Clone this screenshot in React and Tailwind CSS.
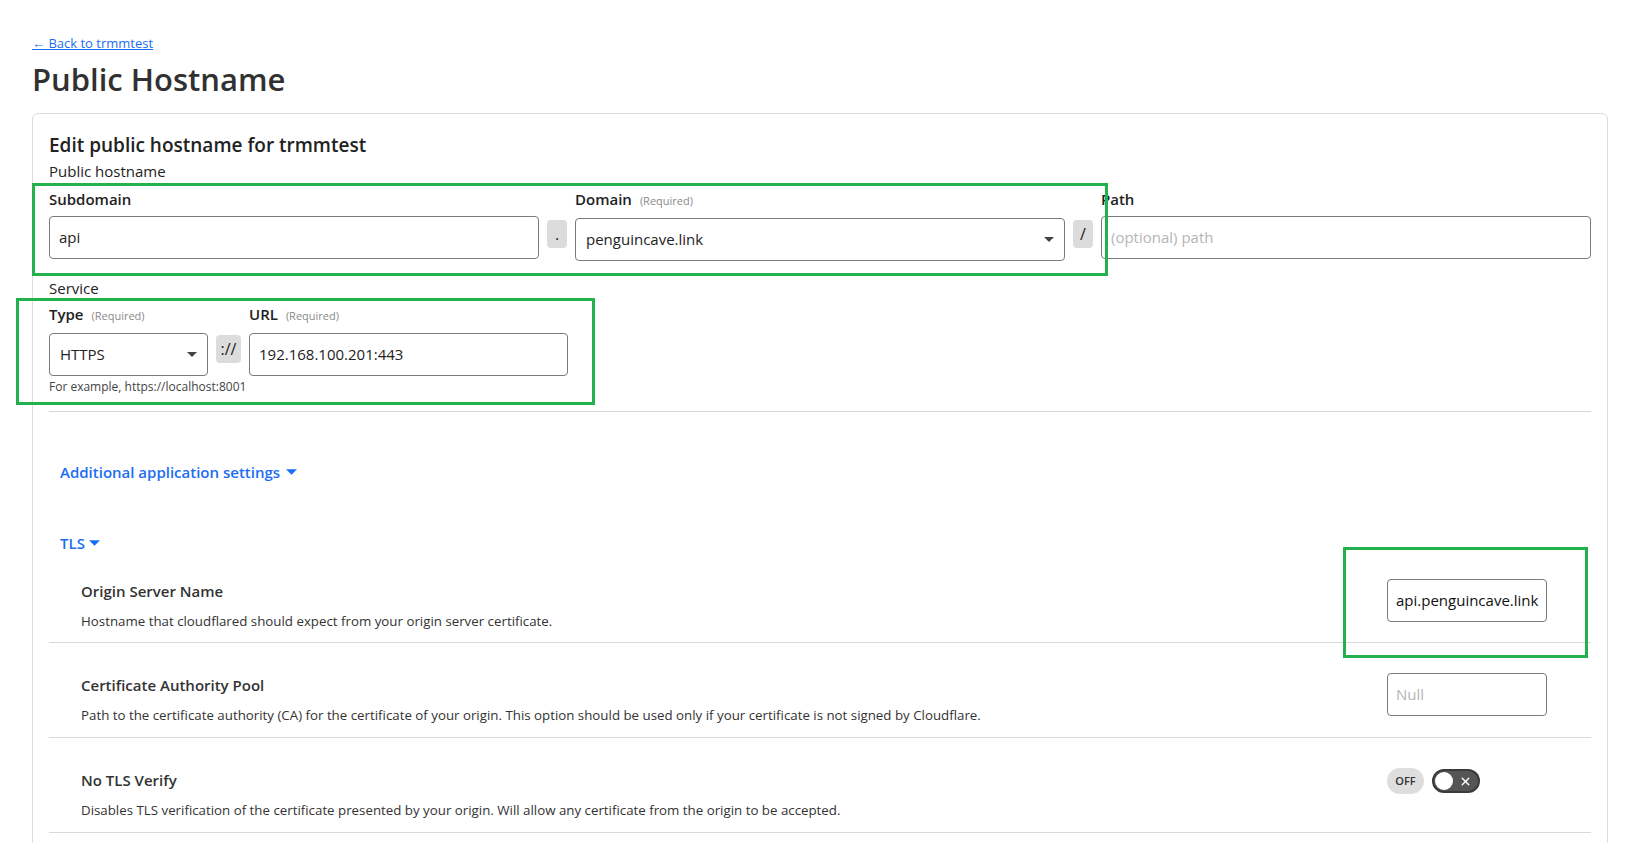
import { X } from 'lucide-react';

function Caret({ className = '' }) {
  return (
    <svg viewBox="0 0 10 5" className={`w-[10px] h-[5px] ${className}`} fill="currentColor">
      <path d="M0 0h10L5 5z" />
    </svg>
  );
}

function Sep({ children, w = 'w-5' }) {
  return (
    <div className="pt-[32px] shrink-0">
      <div className={`h-7 ${w} rounded bg-[#dcdcdc] flex items-center justify-center text-[16px] text-[#222]`}>
        {children}
      </div>
    </div>
  );
}

function Label({ children, required }) {
  return (
    <div className="mb-[6px] flex items-baseline gap-2 text-[15px] leading-[22px] font-semibold text-[#222]">
      {children}
      {required && <span className="text-[11px] font-normal text-[#8a8a8a]">(Required)</span>}
    </div>
  );
}

function SettingRow({ title, desc, children, first }) {
  return (
    <div className={`flex items-start justify-between border-b border-[#d9d9d9] pl-8 pr-11 ${first ? 'pt-6 pb-[11px]' : 'pt-[30px] pb-[12px]'}`}>
      <div>
        <div className="text-[15px] leading-6 font-semibold text-[#333]">{title}</div>
        <div className="mt-2 text-[13.3px] leading-5 text-[#333]">{desc}</div>
      </div>
      {children}
    </div>
  );
}

export default function App() {
  return (
    <div className="relative min-h-screen bg-white px-8 pt-[30px] font-['Open_Sans',sans-serif] text-[#333]">
      <a href="#" className="text-[13px] leading-5 text-[#1b6ef3] underline">← Back to trmmtest</a>
      <h1 className="mt-[5px] text-[31px] leading-10 font-semibold text-[#313131]">Public Hostname</h1>

      <div className="mt-[14px] rounded-md border border-[#dcdcdc] px-4 pt-[17px]">
        <h2 className="text-[19px] leading-7 font-semibold text-[#222]">Edit public hostname for trmmtest</h2>
        <div className="mt-[1px] text-[15px] leading-[22px] text-[#222]">Public hostname</div>

        <div className="mt-[6px] flex gap-2">
          <div className="flex-1">
            <Label>Subdomain</Label>
            <div className="h-[43px] rounded border border-[#7a7a7a] px-[9px] flex items-center text-[15px] text-[#222]">api</div>
          </div>
          <Sep>.</Sep>
          <div className="flex-1">
            <Label required>Domain</Label>
            <div className="h-[43px] rounded border border-[#7a7a7a] pl-[10px] pr-[10px] flex items-center justify-between text-[15px] text-[#222]">
              penguincave.link
              <Caret className="text-[#444]" />
            </div>
          </div>
          <Sep>/</Sep>
          <div className="flex-1">
            <Label>Path</Label>
            <div className="h-[43px] rounded border border-[#7a7a7a] px-[9px] flex items-center text-[15px] text-[#b5b5b5]">(optional) path</div>
          </div>
        </div>

        <div className="mt-[16px] text-[15px] leading-[22px] text-[#222]">Service</div>
        <div className="mt-[4px] flex gap-2">
          <div className="w-[159px]">
            <Label required>Type</Label>
            <div className="h-[43px] rounded border border-[#7a7a7a] pl-[10px] pr-[10px] flex items-center justify-between text-[15px] text-[#222]">
              HTTPS
              <Caret className="text-[#444]" />
            </div>
          </div>
          <Sep w="w-[25px]">://</Sep>
          <div className="w-[319px]">
            <Label required>URL</Label>
            <div className="h-[43px] rounded border border-[#7a7a7a] px-[9px] flex items-center text-[15px] text-[#222]">192.168.100.201:443</div>
          </div>
        </div>
        <div className="mt-[3px] text-[12px] leading-4 text-[#444]">For example, https://localhost:8001</div>

        <div className="mt-[16px] border-t border-[#d6d6d6]" />

        <div className="mt-[48px] pl-[11px] flex items-center gap-[6px] text-[15px] leading-6 font-semibold text-[#1b6ef3]">
          Additional application settings
          <Caret className="w-[11px] h-[6px]" />
        </div>

        <div className="mt-[47px] pl-[11px] flex items-center gap-[4px] text-[15px] leading-6 font-semibold text-[#1b6ef3]">
          TLS
          <Caret className="w-[11px] h-[6px]" />
        </div>

        <SettingRow first title="Origin Server Name" desc="Hostname that cloudflared should expect from your origin server certificate.">
          <div className="w-40 h-[43px] rounded border border-[#7a7a7a] px-2 flex items-center text-[15px] text-[#111] whitespace-nowrap">api.penguincave.link</div>
        </SettingRow>
        <SettingRow title="Certificate Authority Pool" desc="Path to the certificate authority (CA) for the certificate of your origin. This option should be used only if your certificate is not signed by Cloudflare.">
          <div className="w-40 h-[43px] rounded border border-[#7a7a7a] px-2 flex items-center text-[15px] text-[#b5b5b5]">Null</div>
        </SettingRow>
        <SettingRow title="No TLS Verify" desc="Disables TLS verification of the certificate presented by your origin. Will allow any certificate from the origin to be accepted.">
          <div className="w-40 flex items-center gap-2">
            <span className="h-[26px] w-[37px] rounded-full bg-[#dedede] flex items-center justify-center text-[11px] font-semibold text-[#333]">OFF</span>
            <span className="h-6 w-12 rounded-full border-2 border-[#3a3a3a] bg-[#555] flex items-center justify-between pl-[1px] pr-[6px]">
              <span className="h-[18px] w-[18px] rounded-full bg-white" />
              <X size={13} strokeWidth={2.5} className="text-white" />
            </span>
          </div>
        </SettingRow>
        <div className="h-16" />
      </div>

      <div className="pointer-events-none absolute left-[32px] top-[183px] h-[93px] w-[1076px] border-[3px] border-[#22b14c]" />
      <div className="pointer-events-none absolute left-[16px] top-[298px] h-[107px] w-[579px] border-[3px] border-[#22b14c]" />
      <div className="pointer-events-none absolute left-[1343px] top-[547px] h-[111px] w-[245px] border-[3px] border-[#22b14c]" />
    </div>
  );
}
